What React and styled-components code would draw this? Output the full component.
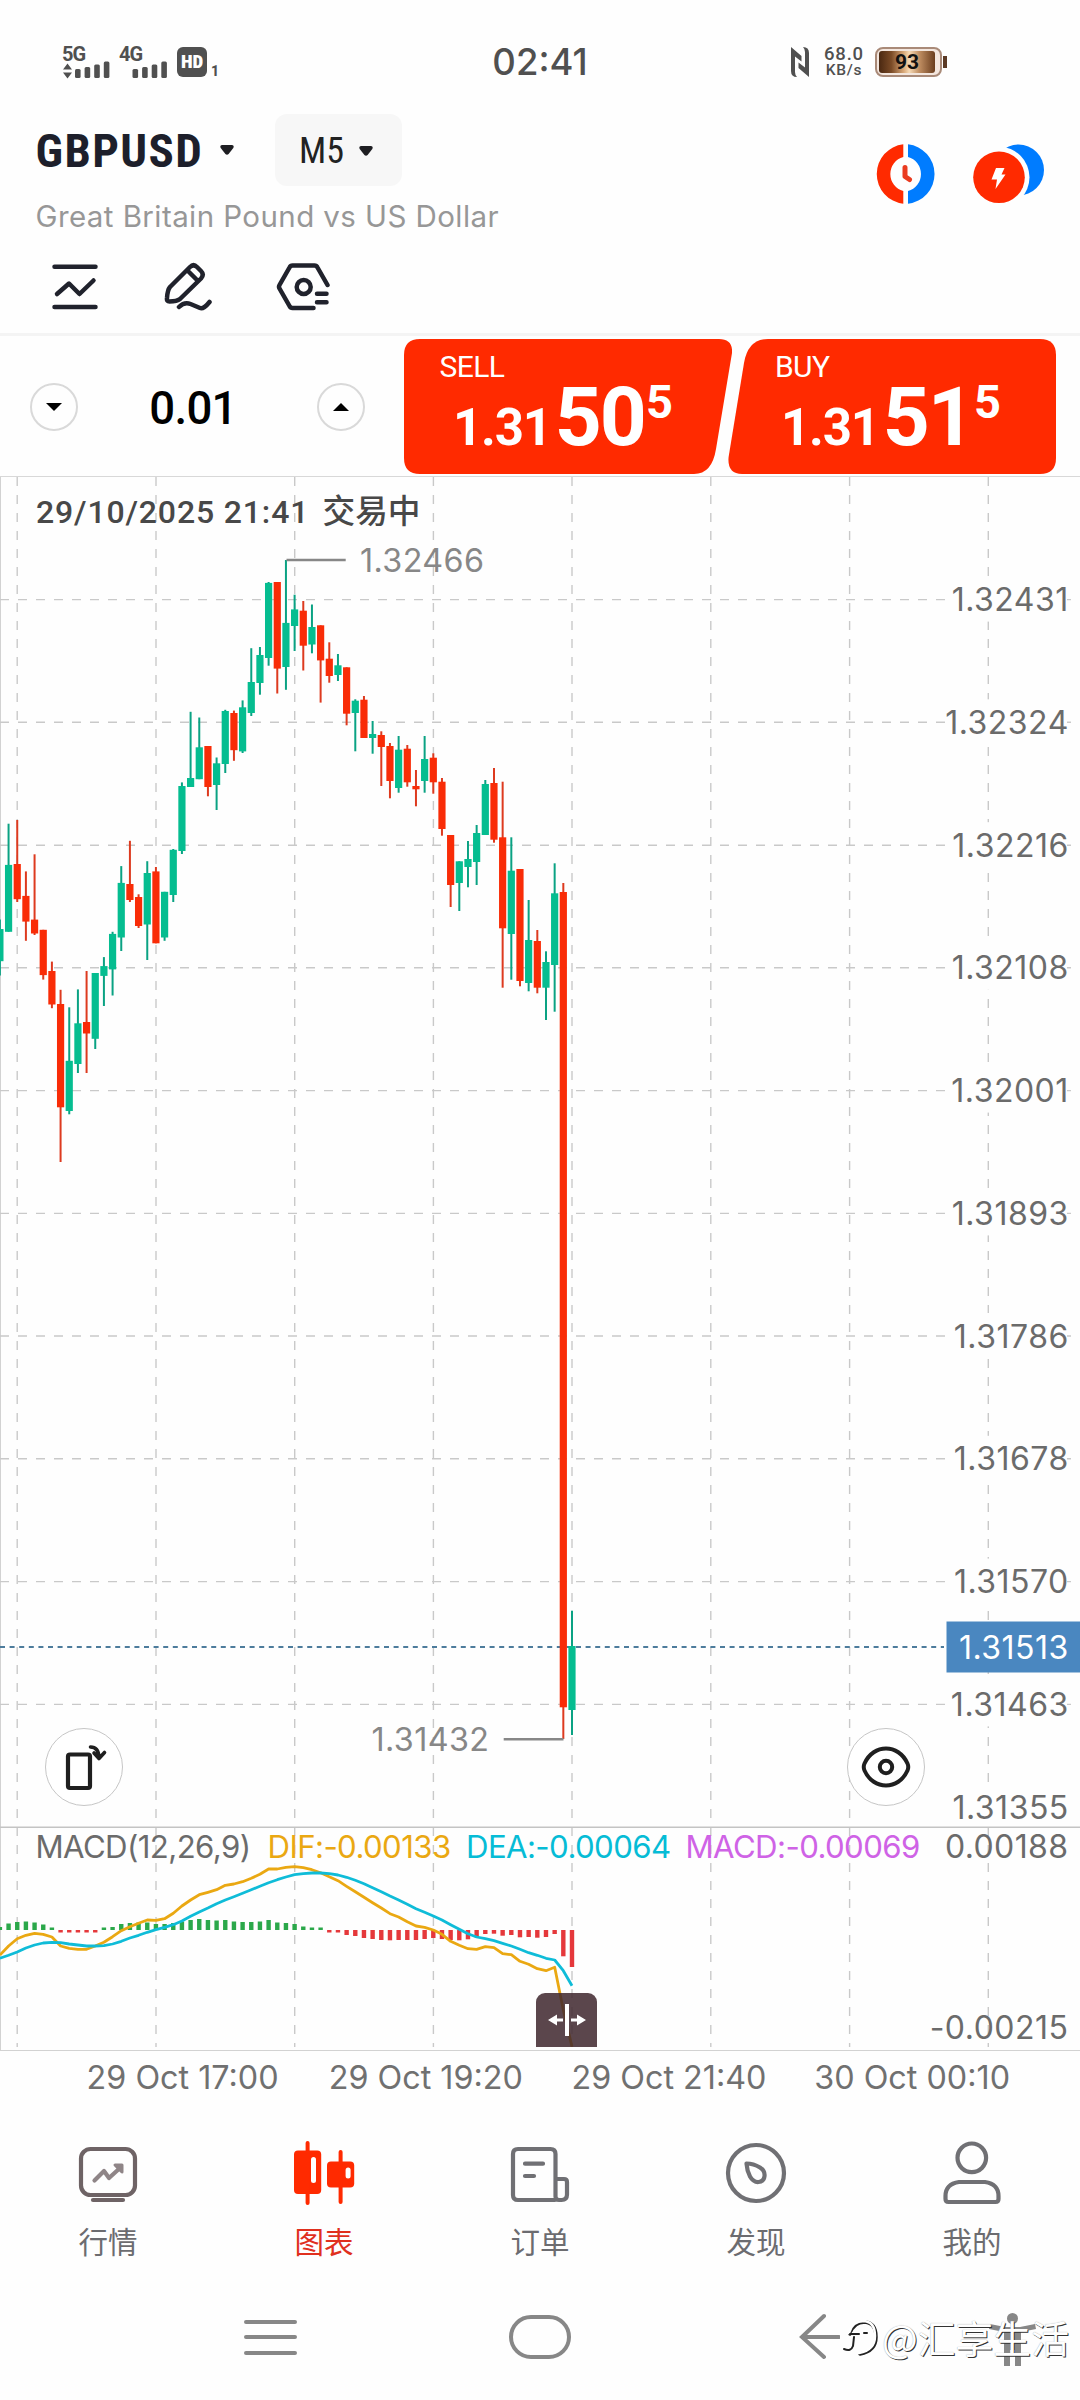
import styled, { createGlobalStyle } from 'styled-components';

const GlobalStyle = createGlobalStyle`
  * {
    box-sizing: border-box;
  }
  body {
    margin: 0;
    background: #fff;
  }
  svg {
    display: block;
  }
`;

const Screen = styled.div`
  width: 1080px;
  height: 2400px;
  display: flex;
  flex-direction: column;
  overflow: hidden;
  background: #fefefe;
  font-family: Roboto, 'Noto Sans CJK SC', sans-serif;

  > * {
    flex-shrink: 0;
  }
`;

/* status bar */

const StatusBar = styled.div`
  height: 100px;
  padding: 43px 62px 0 62px;
  display: grid;
  grid-template-columns: 1fr auto 1fr;
  align-items: start;
  color: #505050;
`;

const StatusGroup = styled.div`
  display: flex;
  height: 38px;
  align-items: center;
  justify-content: ${props => props.$end ? 'flex-end' : 'flex-start'};
  padding-right: ${props => props.$end ? 76 : 0}px;
`;

const Signal = styled.div`
  position: relative;
  width: ${props => props.$width}px;
  height: 36px;
`;

const Network = styled.div`
  font-size: 20px;
  font-weight: 700;
  line-height: 20px;
  letter-spacing: -1px;
`;

const Bars = styled.svg`
  position: absolute;
  left: 0;
  bottom: 0;
`;

const HdBadge = styled.div`
  width: 30px;
  height: 30px;
  margin-right: 4px;
  border-radius: 6px;
  background: #505050;
  color: #fff;
  font-size: 19px;
  font-weight: 900;
  font-stretch: 75%;
  line-height: 30px;
  text-align: center;
`;

const SimIndex = styled.div`
  align-self: flex-end;
  font-size: 14px;
  font-weight: 800;
  line-height: 19px;
`;

const Clock = styled.div`
  font-family: Inter, sans-serif;
  font-size: 36.5px;
  font-weight: 500;
  line-height: 39px;
`;

const Speed = styled.div`
  width: 40px;
  margin: 0 11px 0 15px;
  text-align: center;
  font-size: 18.5px;
  font-weight: 500;
  letter-spacing: 0.8px;
  line-height: 17px;
  white-space: nowrap;

  small {
    display: block;
    font-size: 15.5px;
    letter-spacing: 0.7px;
    line-height: 15px;
  }
`;

const Battery = styled.div`
  position: relative;
  width: 67px;
  height: 30px;
  padding: 2px 5px 2px 2px;
  border: 2px solid #a98a78;
  border-radius: 8px;
  background: #f3e6de;

  &::after {
    content: '';
    position: absolute;
    right: -7px;
    top: 7px;
    width: 4px;
    height: 12px;
    background: #5b3a25;
  }
`;

const BatteryLevel = styled.div`
  height: 22px;
  border-radius: 3px;
  background: linear-gradient(90deg, #4a2811 0%, #7a4a26 22%, #d9a878 44%, #f6d9b4 54%, #c08e62 72%, #6a3d1e 100%);
  color: #111;
  font-size: 21px;
  font-weight: 700;
  line-height: 22px;
  text-align: center;
`;

/* header */

const Header = styled.div`
  height: 136px;
  padding: 14px 35px 0 35.5px;
  display: flex;
  justify-content: space-between;
  align-items: flex-start;
`;

const TitleRow = styled.div`
  height: 72px;
  display: flex;
  align-items: center;
`;

const Symbol = styled.div`
  width: 184px;
  padding-top: 1px;
  font-size: 47px;
  font-weight: 700;
  font-stretch: 75%;
  letter-spacing: 1.4px;
  color: #1d1f2b;
`;

const Caret = styled.svg`
  width: 14px;
  height: 10px;
  fill: #1e1e22;
`;

const Period = styled.div`
  width: 127px;
  height: 72px;
  margin-left: 41.5px;
  padding: 2px 29px 0 24px;
  display: flex;
  align-items: center;
  justify-content: space-between;
  border-radius: 12px;
  background: #f7f7f7;
  color: #222;
  font-size: 36px;
  font-stretch: 75%;
`;

const Description = styled.div`
  margin-top: 10px;
  font-family: Inter, sans-serif;
  font-size: 29.5px;
  letter-spacing: 0.42px;
  line-height: 40px;
  color: #979797;
`;

const HeaderIcons = styled.div`
  display: flex;
  gap: 35px;
  margin-top: 28px;
`;

const Toolbar = styled.div`
  height: 100px;
  padding: 26px 50px 0;
  display: flex;
  gap: 64px;
  border-bottom: 3px solid #f4f4f4;
`;

const LineIcon = styled.svg`
  fill: none;
  stroke: ${props => props.$color || '#20222c'};
  stroke-width: ${props => props.$stroke || 4.5};
  stroke-linecap: round;
  stroke-linejoin: round;
`;

/* order row */

const OrderRow = styled.div`
  height: 141px;
  display: flex;
  align-items: center;
  padding: 1px 0 0 30px;
  border-bottom: 1px solid #d8d8d8;
`;

const Stepper = styled.div`
  width: 335px;
  margin-right: 39px;
  display: flex;
  align-items: center;
  justify-content: space-between;
`;

const StepButton = styled.button`
  width: 48px;
  height: 48px;
  padding: 0;
  display: flex;
  align-items: center;
  justify-content: center;
  border: 2px solid #d9d9d9;
  border-radius: 50%;
  background: none;
`;

const Volume = styled.div`
  font-size: 45.5px;
  font-weight: 500;
  letter-spacing: -0.7px;
  line-height: 54px;
  padding: 5px 9px 0 0;
  color: #000;
`;

const Ticket = styled.button`
  position: relative;
  width: 328px;
  height: 135px;
  padding: 0;
  margin-right: -4px;
  border: none;
  background: none;
  color: #fff;
  font-family: inherit;
  text-align: left;
`;

const TicketShape = styled.svg`
  position: absolute;
  inset: 0;
  fill: #ff2a00;
`;

const Side = styled.div`
  position: relative;
  padding-left: ${props => props.$indent}px;
  margin-top: 8px;
  font-size: 30px;
  line-height: 40px;
  letter-spacing: -0.6px;
`;

const Price = styled.div`
  position: relative;
  height: 87px;
  padding-left: ${props => props.$indent}px;
  display: flex;
  align-items: baseline;
  font-weight: 700;
  font-size: 51px;
  letter-spacing: -1.2px;
  line-height: 60px;
`;

const BigDigits = styled.span`
  margin-left: 4px;
  font-size: 82px;
  letter-spacing: -2px;
`;

const Pip = styled.span`
  position: relative;
  top: -27px;
  padding-left: ${props => props.$gap}px;
  font-size: 47px;
`;

/* chart */

const ChartPanel = styled.div`
  position: relative;
  height: 1573px;
`;

const ChartText = styled.text`
  font-family: ${props => props.$heading ? "Roboto, 'Noto Sans CJK SC'" : 'Inter'}, sans-serif;
  font-size: ${props => props.$size || 32}px;
  font-weight: ${props => props.$heading ? 500 : 400};
  letter-spacing: ${props => props.$spacing || 0}px;
  fill: ${props => props.$color || '#6b6b6b'};
  text-anchor: ${props => props.$end ? 'end' : 'start'};
`;

const FloatButton = styled.button`
  position: absolute;
  left: ${props => props.$left}px;
  top: 1251px;
  width: 78px;
  height: 78px;
  padding: 0;
  display: flex;
  align-items: center;
  justify-content: center;
  border: 1.5px solid #c6c6c6;
  border-radius: 50%;
  background: #fff;
`;

const Handle = styled.div`
  position: absolute;
  left: 536px;
  bottom: 3px;
  width: 61px;
  height: 54px;
  display: flex;
  align-items: center;
  justify-content: center;
  border-radius: 9px 9px 0 0;
  background: rgba(64, 40, 46, 0.86);
`;

const TimeAxis = styled.div`
  height: 56px;
  padding-left: 61px;
  display: flex;
  border-top: 1px solid #d2d2d2;
`;

const TimeLabel = styled.div`
  width: 243.2px;
  text-align: center;
  font-family: Inter, sans-serif;
  font-size: 32.3px;
  line-height: 53px;
  color: #707070;
`;

/* bottom bars */

const TabBar = styled.div`
  height: 165px;
  display: grid;
  grid-template-columns: repeat(5, 1fr);
`;

const Tab = styled.div`
  padding-top: 33px;
  display: flex;
  flex-direction: column;
  align-items: center;
  gap: 13px;
  color: ${props => props.$active ? '#e0301e' : '#6c6c70'};
  font-family: 'Noto Sans CJK SC', sans-serif;
  font-size: 29.5px;
  font-weight: 400;
  line-height: 40px;
`;

const SystemNav = styled.div`
  position: relative;
  height: 129px;
  padding: 42px 42px 0 242px;
  display: flex;
  align-items: flex-start;
`;

const NavIcon = styled.svg`
  margin-right: ${props => props.$gap || 0}px;
  fill: none;
  stroke: #878787;
  stroke-width: 4;
  stroke-linecap: round;
`;

const Watermark = styled.div`
  position: absolute;
  left: 842px;
  top: 39px;
  display: flex;
  align-items: center;
  gap: 4px;
  color: #fff;
  font-family: 'Noto Sans CJK SC', sans-serif;
  font-size: 37.8px;
  line-height: 54px;
  white-space: nowrap;
  text-shadow: 1px 1px 0 #333, 0 0 1px #999;
`;

const UP = '#05bd90';
const DOWN = '#f92c07';

// [high, body top, body bottom, low, direction], chart y in px
const candles = [
  [919.6, 929, 961.2, 975.5, 1], [823.7, 864.9, 931.8, 931.8, 1], [820, 864, 899.2, 902, 0],
  [871.4, 895.9, 921.6, 940.8, 0], [854.3, 919.6, 933.5, 935, 0], [929.8, 929.8, 975.1, 979.6, 0],
  [961.6, 971, 1004.5, 1008.2, 0], [989.8, 1004, 1107.3, 1162, 0], [1007.3, 1060.8, 1111, 1114.3, 1],
  [989.4, 1023.3, 1064, 1073, 1], [971, 1022, 1033.5, 1073, 0], [973, 973, 1038.8, 1049, 1],
  [957.1, 966.1, 975.9, 1006, 1], [931.8, 933.9, 969.4, 995.5, 1], [866.1, 882.9, 937.5, 951, 1],
  [840.8, 884, 900, 902, 0], [894.3, 897, 926, 928, 0], [861.2, 873, 924.5, 960, 1],
  [867, 871.4, 943.3, 943.3, 0], [891.8, 891.8, 937.5, 940.8, 1], [849, 849.8, 895, 902, 1],
  [782.4, 786, 851, 854, 1], [711.8, 778, 787, 787, 1], [717.5, 747.3, 779.2, 779.2, 1],
  [746, 746, 787, 796.3, 0], [757.5, 763.3, 785, 810, 1], [709.8, 711, 764, 773, 1],
  [710.6, 713, 750.2, 760.8, 0], [700.4, 707.3, 751.4, 753, 1], [648.2, 682, 713, 716, 1],
  [647, 655, 683, 694.7, 1], [582, 582.9, 658, 665.7, 1], [582, 582, 668.6, 693.5, 0],
  [560, 622.9, 667, 689.8, 1], [594.7, 609.4, 626, 651, 1], [601, 610.7, 645.7, 670.5, 0],
  [604.5, 627, 644.5, 653.3, 1], [625.3, 625.3, 660.4, 702.6, 0], [642.3, 658.7, 676, 682.7, 0],
  [654, 665.3, 675, 681, 1], [667.3, 667.3, 713.7, 725.3, 0], [699.3, 700.7, 713, 751.3, 1],
  [696, 699.7, 738, 738, 0], [721, 734, 738, 753.7, 1], [731.3, 735, 747, 786, 0],
  [743, 746, 781, 798.3, 0], [736, 749.7, 788, 792.7, 1], [745, 748.7, 782.3, 786.7, 0],
  [770, 786, 789.3, 806.3, 0], [736, 759, 781, 792.7, 1], [753.3, 757.7, 782.3, 793.7, 0],
  [778, 781.7, 829, 835.7, 0], [835, 835, 885, 907, 0], [861.3, 861.3, 883, 911, 1],
  [841, 859, 867, 887.3, 1], [825, 833, 862, 885, 1], [780, 784, 835, 835, 1],
  [768, 783, 839.7, 842.7, 0], [781.7, 837.3, 928.3, 987.7, 0], [837.3, 870.7, 934, 979.7, 1],
  [869, 869, 981, 986.3, 0], [900, 940, 983, 991.3, 1], [930, 941, 987.7, 993.3, 0],
  [951.3, 962, 987.7, 1020, 1], [863.3, 893.3, 965, 1011.7, 1], [883, 892, 1707.3, 1739, 0],
  [1610.7, 1646, 1710, 1735, 1],
];

// bar ends of the histogram, positive above the zero line
const histogram = [
  3, 6.5, 8, 8.5, 7.5, 5.5, 2.5, -2.5, -2.5, -2.5, -2.5, -2.5, 2.5, 3, 6, 7, 7.5, 7.5, 6, 6, 7, 8.5, 10,
  11, 10, 9.5, 10, 8.5, 8, 8, 8.5, 10, 7.5, 7, 6, 3.5, 2.5, 2.5, -2.5, -2.5, -5, -6, -8, -9, -10, -10.3,
  -10, -10, -10, -9, -8, -9, -10, -10.3, -9.3, -7.3, -4, -3.7, -5.7, -5, -7.3, -7, -7.7, -7, -4, -26.3, -37,
];

const dif = [
  765, 738, 716, 706, 700, 703, 711, 738, 745, 748, 748, 738, 727, 710, 692, 680, 670, 660, 661, 656, 640,
  618, 600, 584, 577, 569, 556, 552, 545, 535, 523, 507, 507, 502, 500, 503, 509, 518, 530, 542, 559, 575,
  592, 608, 624, 641, 651, 665, 678, 682, 690, 703, 724, 736, 746, 748, 740, 743, 761, 764, 784, 793, 806,
  812, 802, 930, 1040,
];

const dea = [
  775, 766, 756, 744, 735, 729, 727, 728, 732, 735, 738, 738, 737, 732, 724, 714, 706, 697, 689, 682, 674,
  663, 649, 636, 624, 611, 600, 590, 580, 569, 559, 548, 539, 531, 524, 521, 519, 519, 521, 525, 532, 541,
  551, 563, 575, 588, 600, 613, 626, 637, 648, 660, 674, 688, 701, 711, 716, 722, 730, 738, 748, 758, 766,
  775, 780, 812, 857,
];

const columns = [17.2, 156, 294.7, 433.4, 572, 710.8, 849.6, 988.3];

const levels = [
  ['1.32431', 599.6], ['1.32324', 722.3], ['1.32216', 845.2], ['1.32108', 967.8], ['1.32001', 1090.6],
  ['1.31893', 1213.4], ['1.31786', 1336], ['1.31678', 1458.8], ['1.31570', 1581.6], ['1.31463', 1704.4],
];

const candleX = i => -0.1 + i * 8.668;

const linePoints = values => values.map((v, i) => `${candleX(i).toFixed(1)},${(1700 + v / 3).toFixed(1)}`).join(' ');

const Chart = () => (
  <svg width="1080" height="1573" viewBox="0 477 1080 1573">
    <path d="M0.5 477V2050" stroke="#d2d2d2" />
    <g stroke="#c9c9c9" strokeWidth="1.4" strokeDasharray="9 9">
      {columns.map(x => <path key={x} d={`M${x} 477V1827M${x} 1827V2047`} />)}
      {levels.map(([label, y]) => <path key={label} d={`M0 ${y}H1071`} />)}
    </g>
    <path d="M0 1827.3H1080" stroke="#c4c4c4" strokeWidth="1.5" />

    {levels.map(([label, y]) => (
      <g key={label}>
        <rect x="946" y={y - 23} width="121" height="45" fill="#fefefe" />
        <ChartText x="1068.8" y={y + 11.5} $end $spacing={0.5}>{label}</ChartText>
      </g>
    ))}
    <rect x="946" y="1784" width="121" height="42" fill="#fefefe" />
    <ChartText x="1068.8" y="1819" $end $spacing={0.5}>1.31355</ChartText>

    <path d="M0 1647H944" stroke="#4d7c9c" strokeWidth="2" strokeDasharray="5 4.6" />

    {candles.map(([high, top, bottom, low, up], i) => (
      <g key={i}>
        <path d={`M${candleX(i)} ${high}V${low}`} stroke={up ? '#0aa283' : '#dd3a1f'} strokeWidth="2" />
        <rect x={candleX(i) - 3.6} y={top} width="7.2" height={bottom - top} fill={up ? UP : DOWN} />
      </g>
    ))}
    <path d="M286.5 560H345.7M503.7 1739.3H563.5" stroke="#878787" strokeWidth="2.6" />
    <ChartText x="360" y="572" $color="#878787" $size={32.3} $spacing={0.4}>1.32466</ChartText>
    <ChartText x="371.5" y="1750.5" $color="#878787" $size={32.3} $spacing={0.4}>1.31432</ChartText>

    <rect x="946.5" y="1621.5" width="134" height="51" fill="#4a87c0" />
    <ChartText x="1068.8" y="1659" $color="#fff" $end $spacing={0.5}>1.31513</ChartText>

    {histogram.map((h, i) => (
      <rect
        key={i}
        x={candleX(i) - 2.2}
        y={h > 0 ? 1930 - h : 1930}
        width="4.4"
        height={Math.abs(h)}
        fill={h > 0 ? '#2ba84a' : '#e5383b'}
      />
    ))}
    <g fill="none" strokeWidth="2.8" strokeLinejoin="round">
      <polyline points={linePoints(dif)} stroke="#eaa812" />
      <polyline points={linePoints(dea)} stroke="#0fbcd8" />
    </g>

    <ChartText x="36" y="522.5" $heading $spacing={0.85} $color="#484848">29/10/2025 21:41</ChartText>
    <ChartText x="322.5" y="522.5" $heading $size={32.7} $color="#484848">交易中</ChartText>
    <ChartText x="35.5" y="1857.5" $size={31.2} $spacing={-0.6}>MACD(12,26,9)</ChartText>
    <ChartText x="267.5" y="1857.5" $size={31.2} $spacing={-0.6} $color="#eaa812">DIF:-0.00133</ChartText>
    <ChartText x="466" y="1857.5" $size={31.2} $spacing={-0.6} $color="#06bcd6">DEA:-0.00064</ChartText>
    <ChartText x="685.5" y="1857.5" $size={31.2} $spacing={-0.6} $color="#cf63e6">MACD:-0.00069</ChartText>
    <ChartText x="1068.5" y="1857.5" $end $size={32} $spacing={0.4}>0.00188</ChartText>
    <ChartText x="1068.5" y="2039" $end $size={32} $spacing={0.5}>-0.00215</ChartText>
  </svg>
);

const SignalBars = ({ x = 13, arrows, width }) => (
  <Bars width={width} height="36" viewBox={`0 0 ${width} 36`} fill="#505050">
    {arrows && <path d="M1 25.5l4.5-6 4.5 6zM1 28.5l4.5 6 4.5-6z" />}
    {[9, 11, 13.5, 16.5].map((h, i) => (
      <rect key={h} x={x + i * 9.6} y={34 - h} width="5.6" height={h} rx="1.5" />
    ))}
  </Bars>
);

const DownCaret = () => (
  <Caret viewBox="0 0 14 10"><path d="M2 0h10q2.5 .5 1.3 3L8.6 9Q7 10.5 5.4 9L.7 3Q-.5 .5 2 0z" /></Caret>
);

const MarketIcon = () => (
  <LineIcon width="64" height="68" viewBox="76 2139 64 68" $color="#6e6365" $stroke={4.2}>
    <rect x="81" y="2149" width="54" height="46" rx="9.5" />
    <path d="M93 2200h30" />
    <path d="M94.5 2180.5l9.5-9.5 5 7 11-10" stroke="#8f8587" />
    <path d="M115 2165h7v7z" stroke="#8f8587" fill="#8f8587" strokeWidth="3" />
  </LineIcon>
);

const ChartIcon = () => (
  <svg width="64" height="68" viewBox="292 2139 64 68" fill="#ff2a00">
    <rect x="294" y="2150.5" width="27.2" height="43.5" rx="4" />
    <rect x="327" y="2161.5" width="27.2" height="26" rx="4" />
    <path d="M307.6 2143v60M340.6 2152v50" stroke="#ff2a00" strokeWidth="4" strokeLinecap="round" />
    <rect x="311" y="2157" width="5" height="26" rx="2.5" fill="#fff" />
    <rect x="345.6" y="2167.5" width="5" height="11" rx="2.5" fill="#fff" />
  </svg>
);

const OrdersIcon = () => (
  <LineIcon width="64" height="68" viewBox="508 2139 64 68" $color="#707074" $stroke={4.2}>
    <path d="M555 2200H518q-5 0-5-5v-41q0-5 5-5h32.5q5 0 5 5v42.5q0 3.5 3.5 3.5h2.5q5.5 0 5.5-5.5V2182q0-3-3-3h-8.5M525 2163.7h18M525 2176h9" />
  </LineIcon>
);

const DiscoverIcon = () => (
  <LineIcon width="64" height="68" viewBox="724 2139 64 68" $color="#707074" $stroke={4.2}>
    <circle cx="756" cy="2173" r="28" />
    <path d="M746.5 2163.5q7 0 13.5 4c7 4.5 5.5 14-1.5 14.5-4 .3-6.5-2-8.5-5.5q-3-5.5-3.5-13z" />
  </LineIcon>
);

const ProfileIcon = () => (
  <LineIcon width="64" height="68" viewBox="940 2139 64 68" $color="#707074" $stroke={4.2}>
    <circle cx="971.8" cy="2157.8" r="14.3" />
    <path d="M959 2182h26q13.5 2 13.5 14v3q0 3-3 3h-47q-3 0-3-3v-3q0-12 13.5-14z" />
  </LineIcon>
);

const tabs = [
  { label: '行情', icon: MarketIcon },
  { label: '图表', icon: ChartIcon, active: true },
  { label: '订单', icon: OrdersIcon },
  { label: '发现', icon: DiscoverIcon },
  { label: '我的', icon: ProfileIcon },
];

const App = () => {
  return (
    <Screen>
      <GlobalStyle />
      <StatusBar>
        <StatusGroup>
          <Signal $width={57}>
            <Network>5G</Network>
            <SignalBars arrows width={57} />
          </Signal>
          <Signal $width={58}>
            <Network>4G</Network>
            <SignalBars x={13.5} width={58} />
          </Signal>
          <HdBadge>HD</HdBadge>
          <SimIndex>1</SimIndex>
        </StatusGroup>
        <Clock>02:41</Clock>
        <StatusGroup $end>
          <svg width="18" height="30" viewBox="0 0 18 30" fill="#505050">
            <path d="M0 0l10.5 9v5.5L4 9.5V25q0 3 2 5Q0 30 0 24z" />
            <path d="M18 30L7.5 21v-5.5l6.5 5V5q0-3-2-5 6 0 6 6z" />
          </svg>
          <Speed>68.0<small>KB/s</small></Speed>
          <Battery><BatteryLevel>93</BatteryLevel></Battery>
        </StatusGroup>
      </StatusBar>

      <Header>
        <div>
          <TitleRow>
            <Symbol>GBPUSD</Symbol>
            <DownCaret />
            <Period>M5 <DownCaret /></Period>
          </TitleRow>
          <Description>Great Britain Pound vs US Dollar</Description>
        </div>
        <HeaderIcons>
          <svg width="62" height="64" viewBox="876 142 62 64">
            <path d="M904.3 144.2V157a17 17.5 0 0 0 0 34v12.8a30 30 0 0 1 0-59.6z" fill="#ff2a00" />
            <path d="M909 144.2V157a17 17.5 0 0 1 0 34v12.8a30 30 0 0 0 0-59.6z" fill="#007cff" />
            <path d="M906 167.5v9l4.5 3" fill="none" stroke="#ea3b20" strokeWidth="5" strokeLinecap="round" strokeLinejoin="round" />
          </svg>
          <svg width="73" height="64" viewBox="972 142 73 64">
            <circle cx="1018.5" cy="170" r="25.5" fill="#007cff" />
            <circle cx="999" cy="177.3" r="30.5" fill="#fefefe" />
            <circle cx="999" cy="177.3" r="25.8" fill="#ff2a00" />
            <path d="M996 168h8.5l-3 6.5h4L995.5 189l1.5-9.5h-5.5z" fill="#fff" />
          </svg>
        </HeaderIcons>
      </Header>

      <Toolbar>
        <LineIcon width="50" height="50" viewBox="50 262 50 50">
          <path d="M54.5 266.8h41M54.5 307h41M57 294l12-10.5 10.5 10.5L93.5 280.5" />
        </LineIcon>
        <LineIcon width="48" height="50" viewBox="165 262 48 50">
          <path d="M191 267q3.5-3.5 7 0l4 4q3.5 3.5 0 7.5L181 299q-3 2.5-10.5 2.5-3 0-2.5-3.5.5-8 3-11zM189 271l10 10" />
          <path d="M180 307q5.5-5.5 11.5-3t9.5 4 9.5-6" />
        </LineIcon>
        <LineIcon width="54" height="50" viewBox="276 262 54 50">
          <path d="M327.5 285l-10-17.5q-1-2-3-2h-22q-2 0-3 2L279.5 285q-1 1.7 0 3.5L289.5 306q1 2 3 2h21M317 293.8h9.5M317 302.3h9.5" />
          <circle cx="303.7" cy="287" r="7" />
        </LineIcon>
      </Toolbar>

      <OrderRow>
        <Stepper>
          <StepButton><svg width="16" height="8" viewBox="0 0 16 8"><path d="M0 0h16L8 8z" /></svg></StepButton>
          <Volume>0.01</Volume>
          <StepButton><svg width="16" height="8" viewBox="0 0 16 8"><path d="M0 8h16L8 0z" /></svg></StepButton>
        </Stepper>
        <Ticket>
          <TicketShape width="328" height="135" viewBox="0 0 328 135">
            <path d="M16 0H315q14 0 13 14L312 110q-4 25-22 25H16Q0 135 0 119V16Q0 0 16 0z" />
          </TicketShape>
          <Side $indent={35.5}>SELL</Side>
          <Price $indent={49}>1.31<BigDigits>50</BigDigits><Pip $gap={1}>5</Pip></Price>
        </Ticket>
        <Ticket>
          <TicketShape width="328" height="135" viewBox="0 0 328 135">
            <path d="M40 0H312q16 0 16 16v103q0 16-16 16H14Q-1 135 .6 118L16 24Q20 0 40 0z" />
          </TicketShape>
          <Side $indent={47}>BUY</Side>
          <Price $indent={53}>1.31<BigDigits>51</BigDigits><Pip $gap={1}>5</Pip></Price>
        </Ticket>
      </OrderRow>

      <ChartPanel>
        <Chart />
        <FloatButton $left={45}>
          <LineIcon width="48" height="48" viewBox="60 1743 48 48" $stroke={4.2} $color="#1f1f1f">
            <rect x="68" y="1754.5" width="22" height="33.5" rx="2" />
            <path d="M90.5 1747q8 0 8.5 10.5M94 1753l5 5.5 5.5-6" strokeWidth="3.6" />
          </LineIcon>
        </FloatButton>
        <FloatButton $left={847}>
          <LineIcon width="54" height="48" viewBox="859 1743 54 48" $stroke={4} $color="#1f1f1f">
            <path d="M864.5 1763.5c9-20 34-20 43 0q1.5 3.5 0 7c-9 20-34 20-43 0q-1.5-3.5 0-7z" />
            <circle cx="886" cy="1767" r="6.2" />
          </LineIcon>
        </FloatButton>
        <Handle>
          <svg width="40" height="34" viewBox="0 0 40 34" fill="#fff">
            <rect x="18" y="1" width="4" height="32" />
            <path d="M1 17l9-5.5v4h6v3h-6v4zM39 17l-9-5.5v4h-6v3h6v4z" />
          </svg>
        </Handle>
      </ChartPanel>
      <TimeAxis>
        {['29 Oct 17:00', '29 Oct 19:20', '29 Oct 21:40', '30 Oct 00:10'].map(time => (
          <TimeLabel key={time}>{time}</TimeLabel>
        ))}
      </TimeAxis>

      <TabBar>
        {tabs.map(({ label, icon: Icon, active }) => (
          <Tab key={label} $active={active}>
            <Icon />
            {label}
          </Tab>
        ))}
      </TabBar>

      <SystemNav>
        <NavIcon width="57" height="48" viewBox="242 2313 57 48" $gap={208}>
          <path d="M246 2322h49M246 2337h49M246 2353h49" />
        </NavIcon>
        <NavIcon width="66" height="48" viewBox="507 2313 66 48" $gap={225}>
          <rect x="511" y="2317" width="58" height="40" rx="20" />
        </NavIcon>
        <NavIcon width="42" height="48" viewBox="798 2313 42 48" $gap={148}>
          <path d="M824 2316l-22 21 22 20M803 2337h36" />
        </NavIcon>
        <svg width="50" height="54" viewBox="988 2311 50 54" fill="#878787">
          <circle cx="1012.5" cy="2316.5" r="5.5" />
          <path d="M990 2322l15 3h15l15-3 1 5-15 3v34h-6v-16h-5v16h-6v-34l-15-3z" />
        </svg>
        <Watermark>
          <svg width="36" height="42" viewBox="0 0 36 42" fill="none" strokeLinecap="round">
            <path d="M8 18q3-12 15-12 11 1 11 15T18 38" stroke="#222" strokeWidth="3.5" />
            <path d="M7 17q3-12 15-12 11 1 11 15T17 37M2 33q7-2 8-8l1-8h7m4 0h3" stroke="#fff" strokeWidth="2.5" />
            <path d="M2 33q7 3 9-3l1-9M8 18h9m5-1h3" stroke="#222" strokeWidth="2" />
          </svg>
          @汇享生活
        </Watermark>
      </SystemNav>
    </Screen>
  );
};

export default App;
